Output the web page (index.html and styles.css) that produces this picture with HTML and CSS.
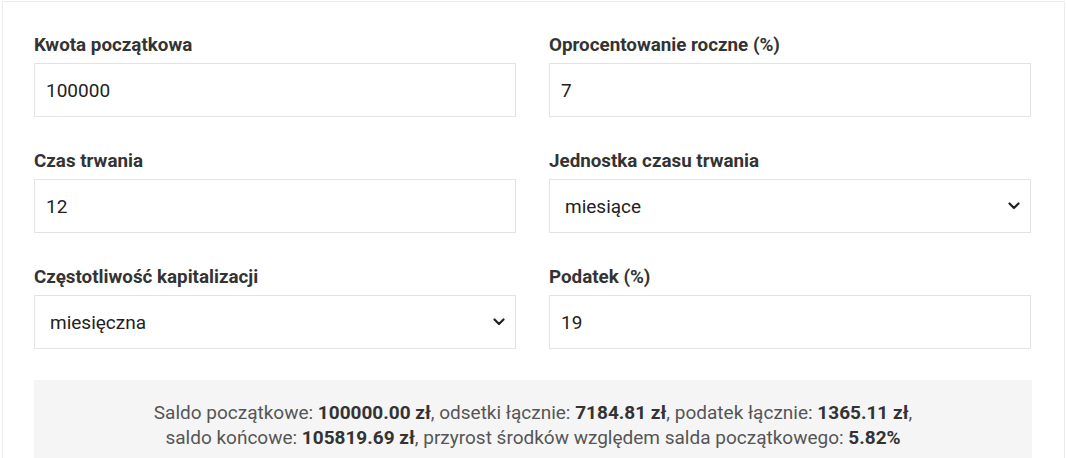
FILE: index.html
```html
<!DOCTYPE html>
<html lang="pl">
<head>
    <meta charset="UTF-8">
    <meta name="viewport" content="width=device-width, initial-scale=1.0">
    <title>Kalkulator lokaty</title>
    <link rel="stylesheet" href="styles.css">
</head>
<body>

<!-- Calculator card -->
<div class="card">
    <div class="form-grid">
        <div class="field">
            <label for="kwota">Kwota początkowa</label>
            <input id="kwota" type="text" value="100000">
        </div>
        <div class="field">
            <label for="oprocentowanie">Oprocentowanie roczne (%)</label>
            <input id="oprocentowanie" type="text" value="7">
        </div>
        <div class="field">
            <label for="czas">Czas trwania</label>
            <input id="czas" type="text" value="12">
        </div>
        <div class="field">
            <label for="jednostka">Jednostka czasu trwania</label>
            <select id="jednostka">
                <option>miesiące</option>
                <option>lata</option>
                <option>dni</option>
            </select>
        </div>
        <div class="field">
            <label for="kapitalizacja">Częstotliwość kapitalizacji</label>
            <select id="kapitalizacja">
                <option>miesięczna</option>
                <option>roczna</option>
                <option>dzienna</option>
            </select>
        </div>
        <div class="field">
            <label for="podatek">Podatek (%)</label>
            <input id="podatek" type="text" value="19">
        </div>
    </div>

    <div class="result">
        Saldo początkowe: <b>100000.00 zł</b>, odsetki łącznie: <b>7184.81 zł</b>, podatek łącznie: <b>1365.11 zł</b>,<br>
        saldo końcowe: <b>105819.69 zł</b>, przyrost środków względem salda początkowego: <b>5.82%</b>
    </div>
</div>

</body>
</html>
```

FILE: styles.css
```css
/* Basic reset */
body {
    margin: 0;
    font-family: Roboto, "Liberation Sans", Arial, sans-serif;
    background-color: #ffffff;
    color: #333333;
}

/* Card */
.card {
    box-sizing: border-box;
    width: 1063px;
    margin: 1px 0 0 2px;
    border: 1px solid #ececec;
    padding: 32px 32px 0 31px;
    min-height: 480px;
}

.form-grid {
    display: grid;
    grid-template-columns: 482px 482px;
    column-gap: 33px;
    row-gap: 33px;
}

.field label {
    display: block;
    font-size: 18.8px;
    font-weight: bold;
    line-height: 22px;
    color: #333333;
    margin-bottom: 7px;
}

.field input,
.field select {
    box-sizing: border-box;
    display: block;
    width: 100%;
    height: 54px;
    border: 1px solid #e3e3e3;
    background-color: #ffffff;
    font-family: inherit;
    font-size: 19px;
    color: #222222;
    padding: 0 11px;
    margin: 0;
    outline: none;
    border-radius: 0;
}

.field select {
    appearance: none;
    -webkit-appearance: none;
    padding-left: 15px;
    background-image: url("data:image/svg+xml,%3Csvg xmlns='http://www.w3.org/2000/svg' width='12' height='8' viewBox='0 0 12 8'%3E%3Cpath d='M1.5 1.5 6 6l4.5-4.5' fill='none' stroke='%23222' stroke-width='2.2' stroke-linecap='round' stroke-linejoin='round'/%3E%3C/svg%3E");
    background-repeat: no-repeat;
    background-position: right 10px center;
}

/* Result box */
.result {
    margin-top: 31px;
    background-color: #f5f5f5;
    padding: 20px 20px 30px;
    text-align: center;
    font-size: 19px;
    line-height: 25px;
    color: #555555;
}

.result b {
    color: #333333;
}
```
